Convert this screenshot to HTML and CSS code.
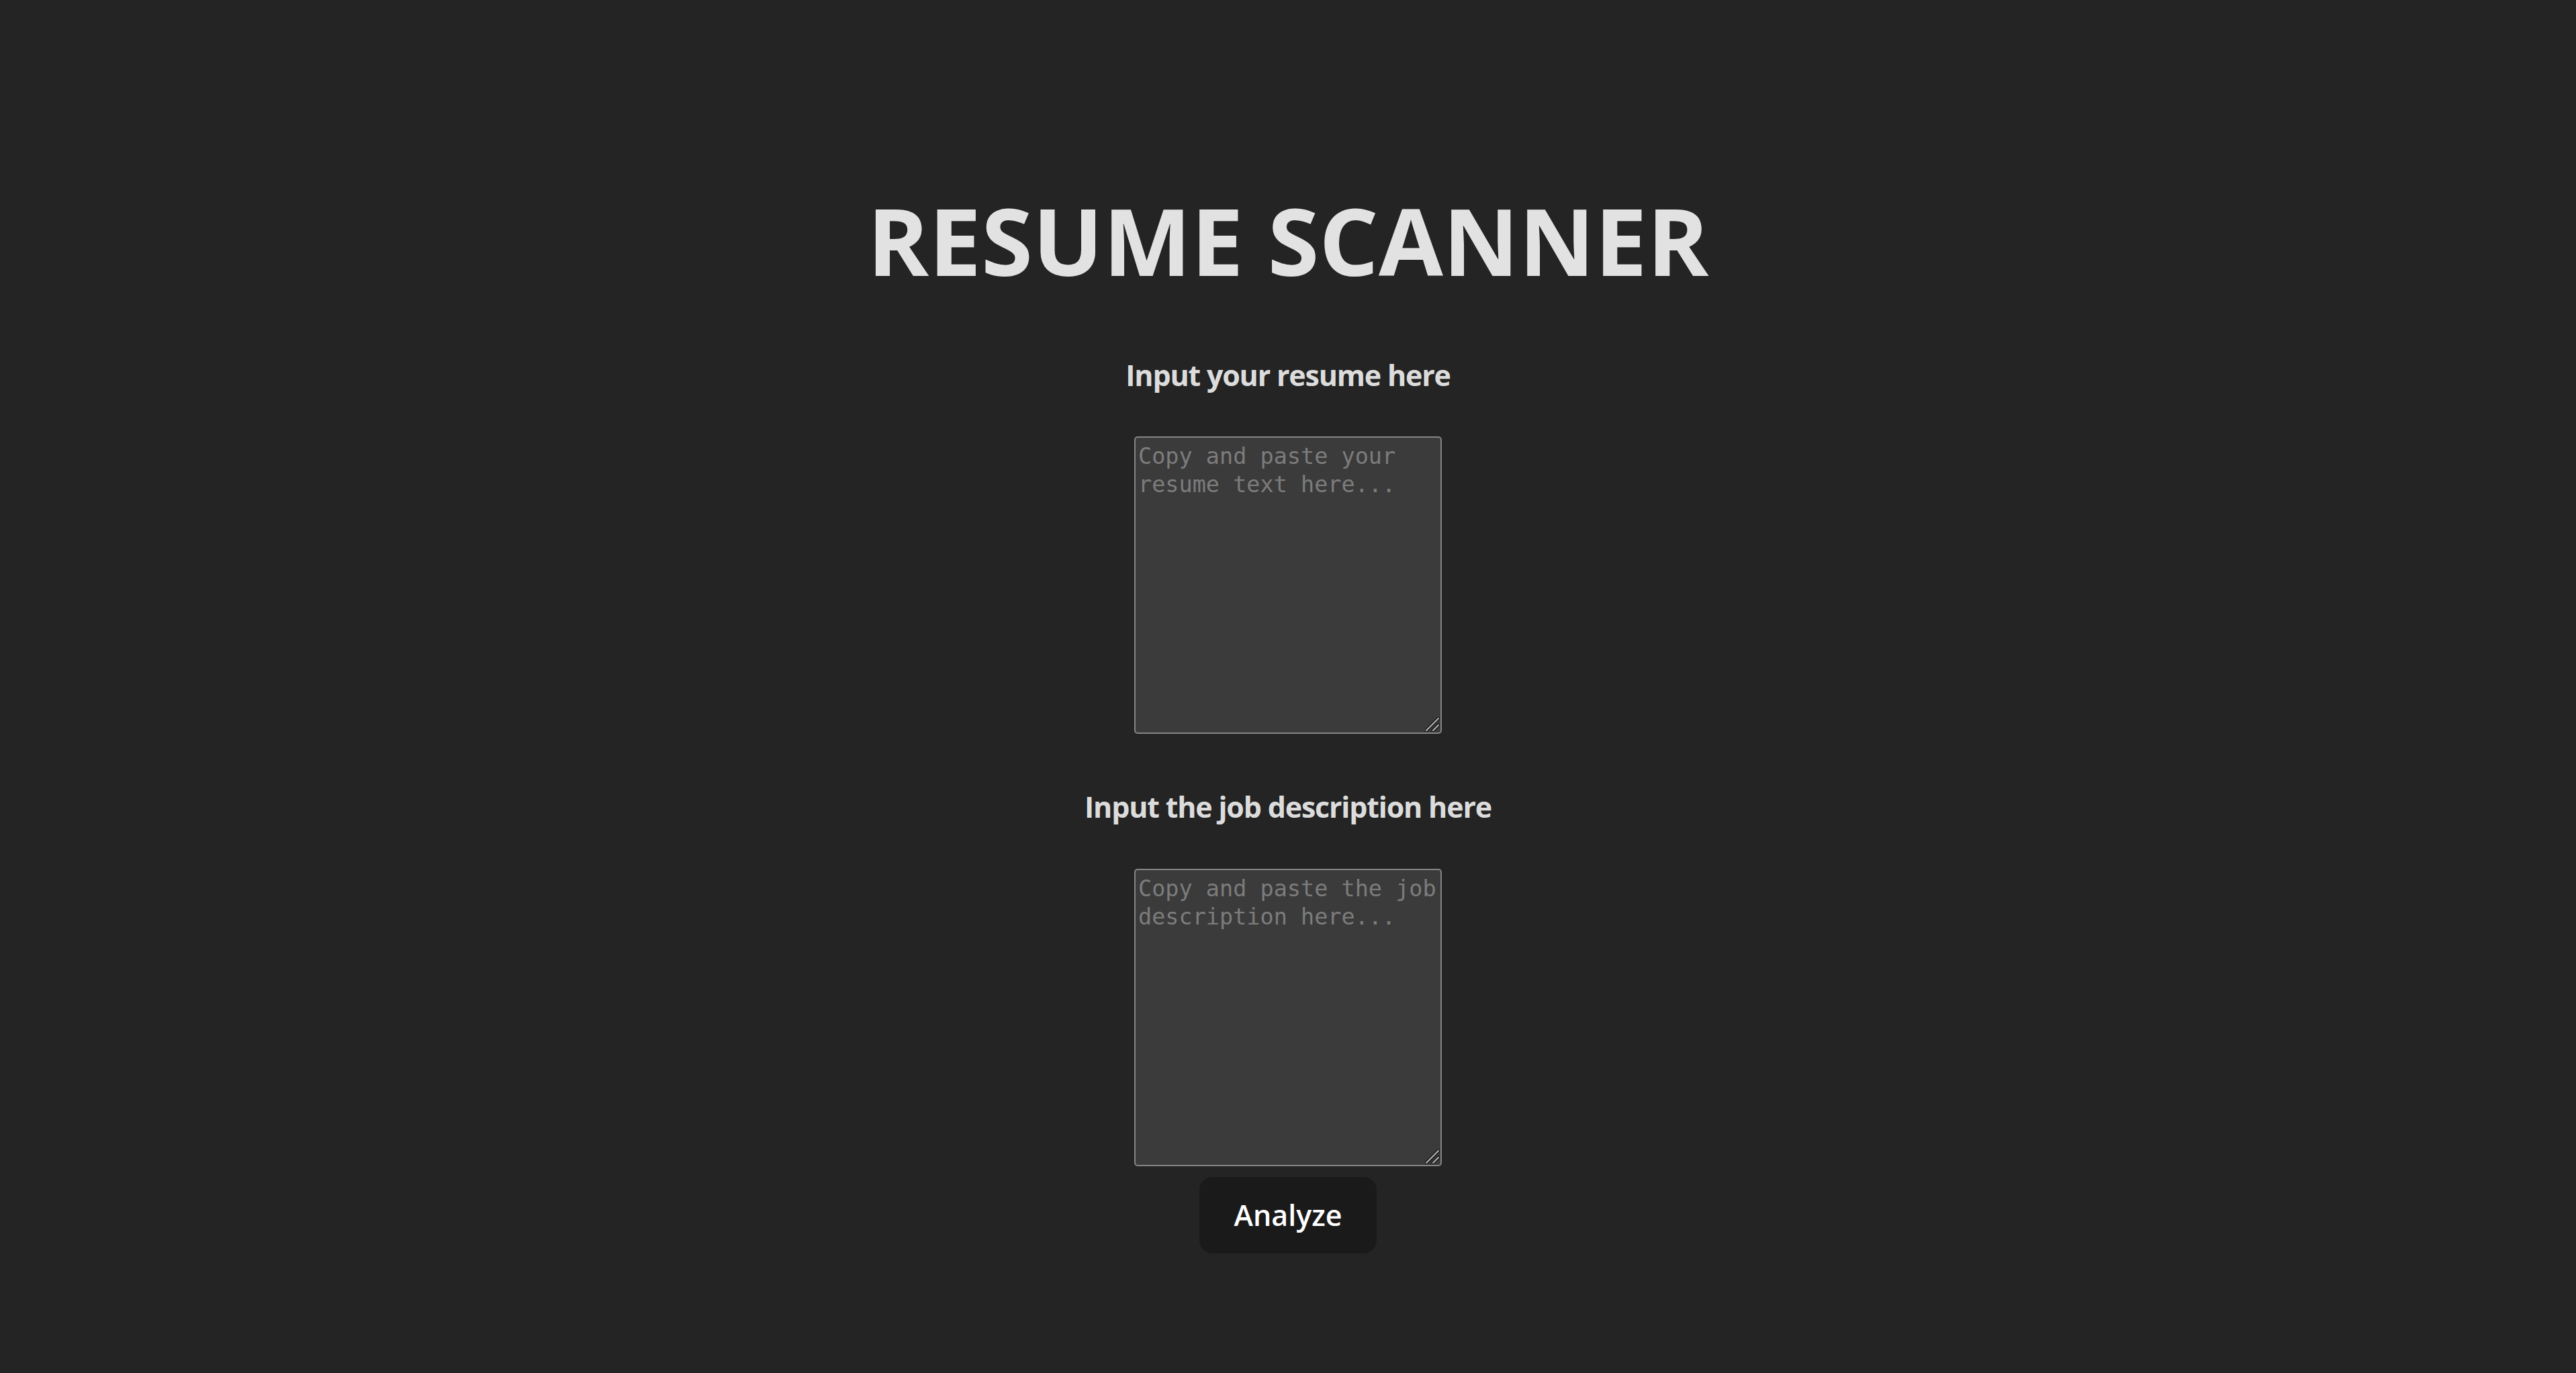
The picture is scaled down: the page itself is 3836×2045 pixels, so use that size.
FILE: index.html
```html
<!DOCTYPE html>
<html lang="en">
<head>
  <meta charset="UTF-8" />
  <title>Resume Scanner</title>
  <link rel="stylesheet" href="styles.css">
</head>
<body>

  <div class="scanner">
    <h1 class="scanner-title">RESUME SCANNER</h1>

    <h3 class="field-label">Input your resume here</h3>
    <div class="field">
      <textarea id="resume" placeholder="Copy and paste your resume text here..."></textarea>
      <svg class="grip" width="22" height="22" viewBox="0 0 22 22">
        <path d="M2 20 L20 2 M12 20 L20 12" stroke="#161616" stroke-width="5" stroke-linecap="round" />
        <path d="M2 20 L20 2 M12 20 L20 12" stroke="#b4b4b4" stroke-width="2.2" stroke-linecap="round" />
      </svg>
    </div>

    <h3 class="field-label">Input the job description here</h3>
    <div class="field">
      <textarea id="jobDescription" placeholder="Copy and paste the job description here..."></textarea>
      <svg class="grip" width="22" height="22" viewBox="0 0 22 22">
        <path d="M2 20 L20 2 M12 20 L20 12" stroke="#161616" stroke-width="5" stroke-linecap="round" />
        <path d="M2 20 L20 2 M12 20 L20 12" stroke="#b4b4b4" stroke-width="2.2" stroke-linecap="round" />
      </svg>
    </div>

    <button type="button" id="analyzeBtn">Analyze</button>
  </div>

  <script>
    const button = document.getElementById("analyzeBtn");

    button.addEventListener("click", function () {
      const resume = document.getElementById("resume").value.trim();
      const job = document.getElementById("jobDescription").value.trim();

      if (!resume || !job) {
        alert("Please fill in both fields first.");
        return;
      }

      // Simple keyword overlap between the two texts
      const words = job.toLowerCase().match(/[a-z]+/g) || [];
      const found = words.filter(w => resume.toLowerCase().includes(w));
      const score = words.length ? Math.round(found.length / words.length * 100) : 0;
      alert("Match score: " + score + "%");
    });
  </script>

</body>
</html>
```

FILE: styles.css
```css
body {
  margin: 0;
  background-color: #242424;
  color: rgba(255, 255, 255, 0.87);
  font-family: "Open Sans", Arial, sans-serif;
}
.scanner {
  display: flex;
  flex-direction: column;
  align-items: center;
  padding-top: 274px;
}
.scanner-title {
  font-size: 139px;
  font-weight: 700;
  line-height: 1.2;
  margin: 0;
}
.field-label {
  font-size: 43px;
  font-weight: 700;
  letter-spacing: -1.2px;
  line-height: 1.2;
  margin: 92px 0 66px;
}
.field-label + .field + .field-label {
  margin-top: 83px;
}
.field {
  position: relative;
}
.field textarea {
  display: block;
  box-sizing: border-box;
  width: 458px;
  height: 443px;
  padding: 7px 2px 4px 4px;
  background-color: #3b3b3b;
  color: #e0e0e0;
  border: 2px solid #858585;
  border-radius: 5px;
  font-family: "DejaVu Sans Mono", monospace;
  font-size: 33.5px;
  line-height: 42px;
  resize: none;
  outline: none;
}
.field textarea::placeholder {
  color: #7c7c7c;
}
.grip {
  position: absolute;
  right: 3px;
  bottom: 3px;
  pointer-events: none;
}
button {
  width: 264px;
  height: 114px;
  margin-top: 16px;
  padding: 0;
  background-color: #1a1a1a;
  border: none;
  border-radius: 20px;
  color: #ffffff;
  font-family: "Open Sans", Arial, sans-serif;
  font-size: 43px;
  font-weight: 600;
  cursor: pointer;
}
button:hover {
  background-color: #111111;
}
```
